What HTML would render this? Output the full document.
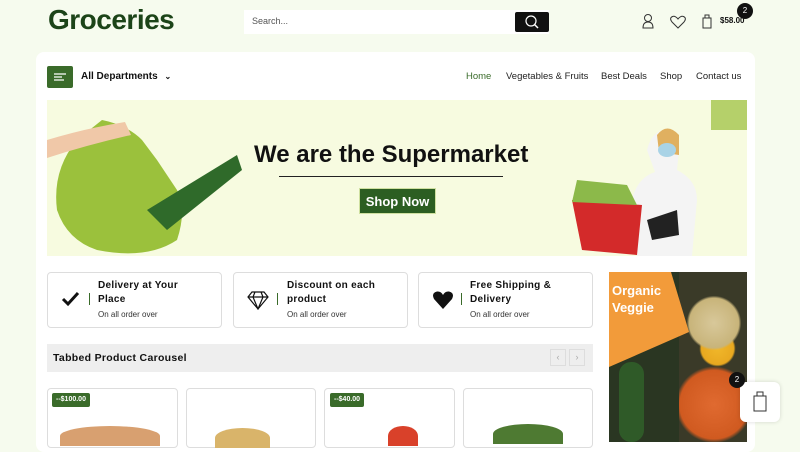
<!DOCTYPE html>
<html><head><meta charset="utf-8"><style>
*{margin:0;padding:0;box-sizing:border-box}
body{width:800px;height:441px;overflow:hidden;background:#f6fbee;font-family:"Liberation Sans",sans-serif;position:relative;color:#111}
.a{position:absolute}
.logo{left:48px;top:4px;font-size:28px;font-weight:bold;color:#1c4418;letter-spacing:-0.5px}
.search{left:244px;top:10px;width:305px;height:24px;background:#fff}
.search span{position:absolute;left:8px;top:6px;font-size:9px;color:#555}
.sbtn{position:absolute;right:0;top:2px;width:34px;height:20px;background:#111;border-radius:2px}
.panel{left:36px;top:52px;width:719px;height:400px;background:#fff;border-radius:8px}
.menu{left:47px;top:66px;width:26px;height:22px;background:#3a6b2a;border-radius:2px}
.nav{top:71px;font-size:9.5px;color:#222}
.banner{left:47px;top:100px;width:700px;height:156px;background:#f7fbe0;overflow:hidden}
.box{top:272px;height:56px;border:1px solid #ddd;border-radius:4px;background:#fff}
.bt{font-size:10px;font-weight:bold;line-height:14px;letter-spacing:.3px}
.bs{font-size:8px;color:#333}
.bar{width:1px;height:12px;background:#3a6b2a}
.tab{left:47px;top:344px;width:546px;height:28px;background:#eee}
.card{top:388px;height:60px;border:1px solid #ddd;border-radius:4px;background:#fff}
.tag{top:393px;height:14px;background:#3a6b2a;color:#fff;font-size:7px;padding:3px 4px;border-radius:2px;font-weight:bold}
</style></head><body>
<div class="a logo">Groceries</div>
<div class="a search"><span>Search...</span><div class="sbtn"><svg width="34" height="20"><circle cx="16" cy="9" r="5" stroke="#fff" stroke-width="1.2" fill="none"/><line x1="19.5" y1="12.5" x2="23" y2="16" stroke="#fff" stroke-width="1.5"/></svg></div></div>
<svg class="a" style="left:640px;top:12px" width="80" height="20"><circle cx="8" cy="6" r="3.5" stroke="#333" fill="none"/><path d="M3 16 Q3 10 8 10 Q13 10 13 16Z" stroke="#333" fill="none"/><path d="M38 16 L32 10 Q29 6 32.5 4.5 Q35 3.5 38 7 Q41 3.5 43.5 4.5 Q47 6 44 10Z" stroke="#333" fill="none"/><rect x="63" y="6" width="8" height="10" stroke="#333" fill="none"/><path d="M65 6 V3 H69 V6" stroke="#333" fill="none"/></svg>
<div class="a" style="left:720px;top:16px;font-size:8px;font-weight:bold">$58.00</div>
<div class="a" style="left:737px;top:3px;width:16px;height:16px;border-radius:50%;background:#111;color:#fff;font-size:8px;text-align:center;line-height:16px">2</div>
<div class="a panel"></div>
<div class="a menu"><svg width="26" height="22"><path d="M7 8h12M7 11h8M7 14h10" stroke="#fff" stroke-width="1.3"/></svg></div>
<div class="a" style="left:81px;top:71px;font-size:10px;font-weight:bold">All Departments <span style="font-size:8px;margin-left:4px">⌄</span></div>
<div class="a nav" style="left:466px;color:#3a6b2a">Home</div>
<div class="a nav" style="left:506px">Vegetables &amp; Fruits</div>
<div class="a nav" style="left:601px">Best Deals</div>
<div class="a nav" style="left:660px">Shop</div>
<div class="a nav" style="left:696px">Contact us</div>
<div class="a banner">
<div class="a" style="left:664px;top:0;width:36px;height:30px;background:#b5d06a"></div>
<svg class="a" style="left:0;top:0" width="200" height="156"><path d="M55 20 Q80 25 95 40 L110 60 L130 90 Q140 110 130 140 Q100 160 50 150 Q20 140 10 110 Q5 70 30 40Z" fill="#9bc13c"/><path d="M0 40 Q40 28 78 22 L84 35 Q40 45 0 58Z" fill="#f0c8a8"/><path d="M100 110 L190 55 L195 70 L120 130Z" fill="#2f6a2a"/></svg>
<svg class="a" style="left:520px;top:10px" width="150" height="146"><path d="M80 40 Q85 20 100 20 Q112 22 112 40 L110 60 Q130 70 130 90 L125 146 L70 146 L65 90 Q70 68 88 62Z" fill="#f4f4f4"/><path d="M90 25 Q100 12 112 25 L112 45 L92 42Z" fill="#e0b060"/><ellipse cx="100" cy="40" rx="9" ry="7" fill="#a9d3e6"/><path d="M5 90 L75 95 L70 145 L15 140Z" fill="#d32a2a"/><path d="M10 70 L60 75 L70 95 L5 92Z" fill="#8cb94a"/><path d="M80 110 L110 100 L112 125 L85 130Z" fill="#222"/></svg>
<div class="a" style="left:207px;top:41px;font-size:24px;font-weight:bold">We are the Supermarket</div>
<div class="a" style="left:232px;top:76px;width:224px;height:1px;background:#222"></div>
<div class="a" style="left:312px;top:88px;width:77px;height:26px;background:#2c5e22;color:#fff;font-weight:bold;font-size:13px;text-align:center;line-height:26px;border:1px solid #cfe0a0">Shop Now</div>
</div>
<div class="a box" style="left:47px;width:175px"></div>
<div class="a box" style="left:233px;width:175px"></div>
<div class="a box" style="left:418px;width:175px"></div>
<svg class="a" style="left:61px;top:291px" width="20" height="16"><path d="M2 8 L7 13 L17 2" stroke="#111" stroke-width="3" fill="none"/></svg>
<svg class="a" style="left:247px;top:290px" width="22" height="20"><path d="M5 2 H17 L21 7 L11 19 L1 7Z M1 7 H21 M8 2 L6 7 L11 19 L16 7 L14 2" stroke="#111" stroke-width="1.2" fill="none"/></svg>
<svg class="a" style="left:432px;top:290px" width="22" height="20"><path d="M11 19 L2 9 Q-1 3 5 1.5 Q9 1 11 5 Q13 1 17 1.5 Q23 3 20 9Z" fill="#111"/></svg>
<div class="a bar" style="left:89px;top:293px"></div><div class="a bar" style="left:277px;top:293px"></div><div class="a bar" style="left:461px;top:293px"></div>
<div class="a bt" style="left:98px;top:279px">Delivery at Your<br>Place</div><div class="a bs" style="left:98px;top:310px">On all order over</div>
<div class="a bt" style="left:287px;top:279px">Discount on each<br>product</div><div class="a bs" style="left:287px;top:310px">On all order over</div>
<div class="a bt" style="left:470px;top:279px">Free Shipping &amp;<br>Delivery</div><div class="a bs" style="left:470px;top:310px">On all order over</div>
<div class="a tab"><div class="a" style="left:6px;top:8px;font-size:10.5px;font-weight:bold;letter-spacing:.3px">Tabbed Product Carousel</div>
<div class="a" style="left:503px;top:5px;width:16px;height:17px;border:1px solid #ddd;font-size:9px;color:#aaa;text-align:center;line-height:15px">‹</div>
<div class="a" style="left:522px;top:5px;width:16px;height:17px;border:1px solid #ddd;font-size:9px;color:#aaa;text-align:center;line-height:15px">›</div></div>
<div class="a card" style="left:47px;width:131px"></div>
<div class="a card" style="left:186px;width:130px"></div>
<div class="a card" style="left:324px;width:131px"></div>
<div class="a card" style="left:463px;width:130px"></div>
<div class="a tag" style="left:52px">--$100.00</div>
<div class="a tag" style="left:330px">--$40.00</div>
<div class="a" style="left:60px;top:426px;width:100px;height:20px;border-radius:50% 50% 0 0;background:#d8a070"></div>
<div class="a" style="left:215px;top:428px;width:55px;height:20px;border-radius:50% 50% 0 0;background:#d9b46a"></div>
<div class="a" style="left:388px;top:426px;width:30px;height:20px;border-radius:50% 50% 0 0;background:#d9412a"></div>
<div class="a" style="left:493px;top:424px;width:70px;height:20px;border-radius:50% 50% 0 0;background:#4e7a32"></div>
<div class="a" style="left:609px;top:272px;width:138px;height:170px;background:#2a3622;overflow:hidden">
<div class="a" style="left:70px;top:0;width:70px;height:170px;background:radial-gradient(circle at 50% 30%,#d8c89a 0,#c8b47a 20%,transparent 22%),radial-gradient(circle at 55% 45%,#f0b72a 0,#e8a820 16%,transparent 18%),radial-gradient(circle at 50% 78%,#e06a30 0,#d05a20 25%,transparent 28%),#3a3a28"></div>
<div class="a" style="left:10px;top:90px;width:25px;height:80px;background:#2f5a28;border-radius:12px"></div>
<svg class="a" style="left:0;top:0" width="80" height="100"><path d="M0 0 H62 L80 60 L0 95Z" fill="#f29b3a"/></svg>
<div class="a" style="left:3px;top:10px;color:#fff;font-weight:bold;font-size:13px;line-height:17px">Organic<br>Veggie</div></div>
<div class="a" style="left:740px;top:382px;width:40px;height:40px;background:#fff;border-radius:6px;box-shadow:0 0 4px rgba(0,0,0,.15)"><svg width="40" height="40"><rect x="14" y="14" width="12" height="15" stroke="#333" fill="none"/><path d="M17 14 V10 H23 V14" stroke="#333" fill="none"/></svg></div>
<div class="a" style="left:729px;top:372px;width:16px;height:16px;border-radius:50%;background:#111;color:#fff;font-size:8px;text-align:center;line-height:16px">2</div>
</body></html>
